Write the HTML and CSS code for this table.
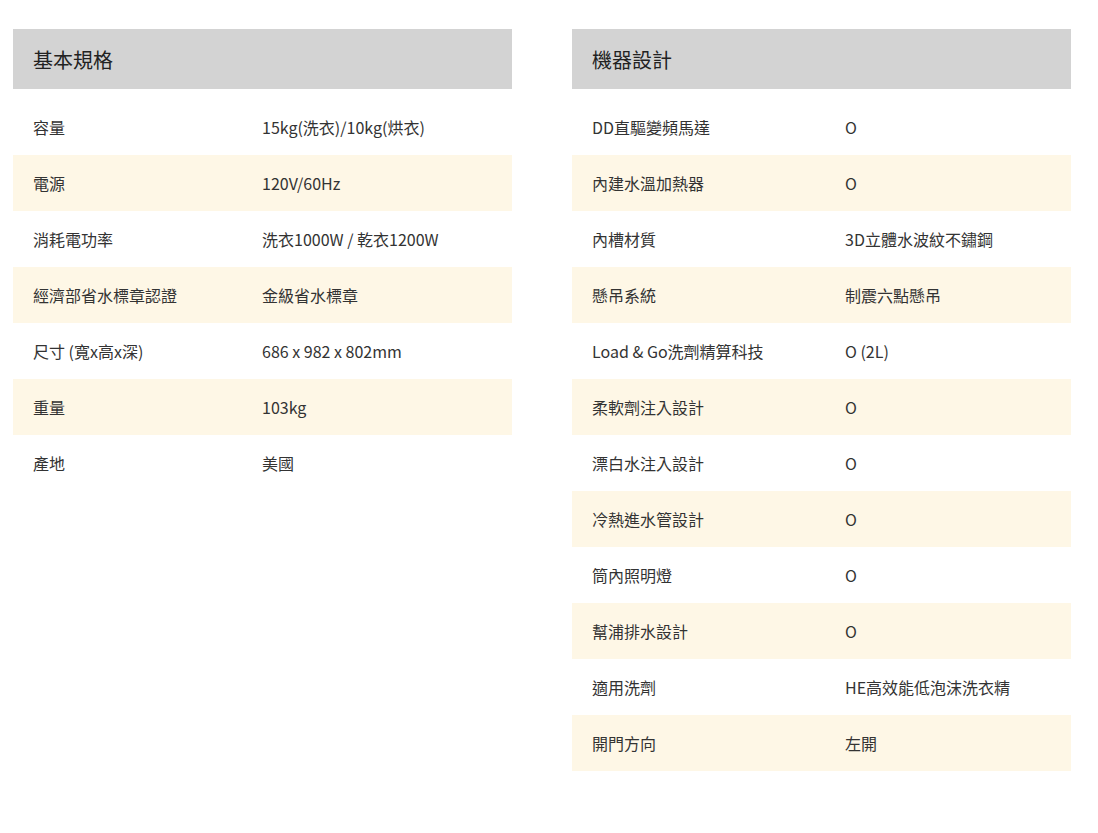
FILE: index.html
```html
<!DOCTYPE html>
<html lang="zh-Hant">
<head>
<meta charset="utf-8">
<link rel="stylesheet" href="styles.css">
</head>
<body>
<div class="page">
  <section class="spec spec-left">
    <h2 class="spec-title">基本規格</h2>
    <div class="rows">
      <div class="row"><span class="k">容量</span><span class="v">15kg(洗衣)/10kg(烘衣)</span></div>
      <div class="row alt"><span class="k">電源</span><span class="v">120V/60Hz</span></div>
      <div class="row"><span class="k">消耗電功率</span><span class="v">洗衣1000W / 乾衣1200W</span></div>
      <div class="row alt"><span class="k">經濟部省水標章認證</span><span class="v">金級省水標章</span></div>
      <div class="row"><span class="k">尺寸 (寬x高x深)</span><span class="v">686 x 982 x 802mm</span></div>
      <div class="row alt"><span class="k">重量</span><span class="v">103kg</span></div>
      <div class="row"><span class="k">產地</span><span class="v">美國</span></div>
    </div>
  </section>
  <section class="spec spec-right">
    <h2 class="spec-title">機器設計</h2>
    <div class="rows">
      <div class="row"><span class="k">DD直驅變頻馬達</span><span class="v">O</span></div>
      <div class="row alt"><span class="k">內建水溫加熱器</span><span class="v">O</span></div>
      <div class="row"><span class="k">內槽材質</span><span class="v">3D立體水波紋不鏽鋼</span></div>
      <div class="row alt"><span class="k">懸吊系統</span><span class="v">制震六點懸吊</span></div>
      <div class="row"><span class="k">Load &amp; Go洗劑精算科技</span><span class="v">O (2L)</span></div>
      <div class="row alt"><span class="k">柔軟劑注入設計</span><span class="v">O</span></div>
      <div class="row"><span class="k">漂白水注入設計</span><span class="v">O</span></div>
      <div class="row alt"><span class="k">冷熱進水管設計</span><span class="v">O</span></div>
      <div class="row"><span class="k">筒內照明燈</span><span class="v">O</span></div>
      <div class="row alt"><span class="k">幫浦排水設計</span><span class="v">O</span></div>
      <div class="row"><span class="k">適用洗劑</span><span class="v">HE高效能低泡沫洗衣精</span></div>
      <div class="row alt"><span class="k">開門方向</span><span class="v">左開</span></div>
    </div>
  </section>
</div>
</body>
</html>
```
FILE: styles.css
```css
html, body {
  margin: 0;
  padding: 0;
  background: #ffffff;
}
body {
  font-family: "Noto Sans CJK TC", "Noto Sans", sans-serif;
  color: #333333;
}
.page {
  display: flex;
  gap: 60px;
  padding: 29px 0 0 13px;
  align-items: flex-start;
}
.spec {
  width: 499px;
}
.spec-title {
  margin: 0 0 10px 0;
  height: 60px;
  display: flex;
  align-items: center;
  padding: 0 20px;
  background: #d3d3d3;
  font-size: 20px;
  font-weight: 400;
  color: #222222;
}
.rows {
  display: flex;
  flex-direction: column;
}
.row {
  display: grid;
  height: 56px;
  align-items: center;
  font-size: 16px;
  color: #333333;
}
.spec-left .row {
  grid-template-columns: 249px 1fr;
}
.spec-right .row {
  grid-template-columns: 273px 1fr;
}
.row .k {
  padding-left: 20px;
}
.row.alt {
  background: #fef7e6;
}
```
